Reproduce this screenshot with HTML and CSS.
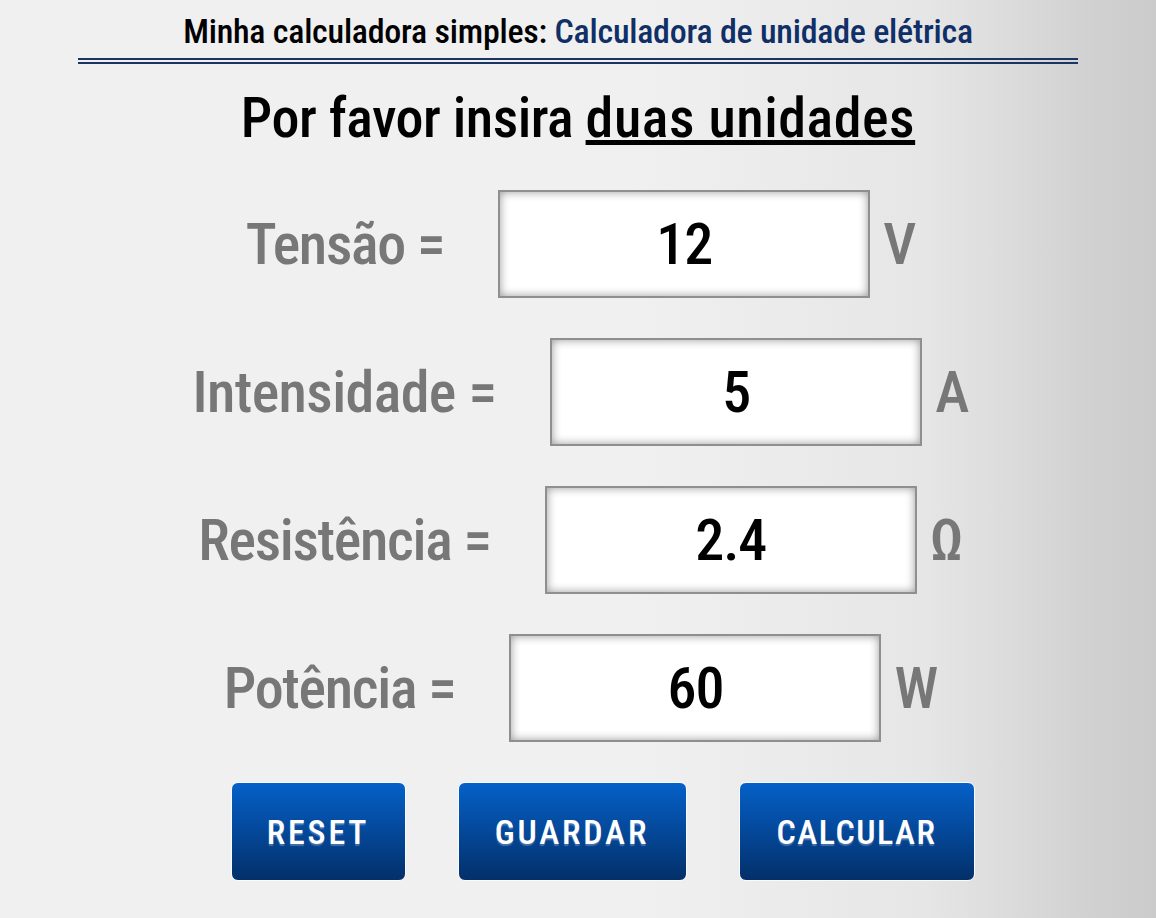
FILE: index.html
```html
<!DOCTYPE html>
<html lang="pt">

<head>
    <meta charset="UTF-8">
    <title>Calculadora de unidade elétrica</title>
    <link rel="stylesheet" href="styles.css">
</head>

<body>
    <div class="wrap">
        <h2 class="title">Minha calculadora simples: <span class="sub">Calculadora de unidade elétrica</span></h2>
        <h1 class="ask">Por favor insira <u>duas unidades</u></h1>

        <div class="row">
            <label class="name">Tensão =</label>
            <div class="box">12</div>
            <span class="unit">V</span>
        </div>
        <div class="row">
            <label class="name name-wide">Intensidade =</label>
            <div class="box">5</div>
            <span class="unit">A</span>
        </div>
        <div class="row">
            <label class="name">Resistência =</label>
            <div class="box">2.4</div>
            <span class="unit">Ω</span>
        </div>
        <div class="row">
            <label class="name">Potência =</label>
            <div class="box">60</div>
            <span class="unit">W</span>
        </div>

        <div class="btns">
            <button class="btn btn-reset">RESET</button>
            <button class="btn btn-save">GUARDAR</button>
            <button class="btn btn-calc">CALCULAR</button>
        </div>
    </div>
</body>

</html>
```

FILE: styles.css
```css
* {
    margin: 0;
    padding: 0;
    box-sizing: border-box;
}

html,
body {
    height: 100%;
}

body {
    font-family: "Roboto", "Liberation Sans", sans-serif;
    font-stretch: condensed;
    background: linear-gradient(to right, #f0f0f0 0, #f0f0f0 55%, #e6e6e6 80%, #dcdcdc 87%, #d0d0d0 95%, #cbcbcb 100%);
    overflow: hidden;
}

.wrap {
    width: 1000px;
    margin-left: 78px;
}

.title {
    height: 64px;
    padding-top: 9px;
    border-bottom: 6px double #1a3563;
    text-align: center;
    font-size: 34px;
    line-height: 44px;
    font-weight: 500;
    letter-spacing: -0.25px;
    color: #000;
    white-space: nowrap;
}

.title .sub {
    color: #0f2f66;
    font-weight: 500;
}

.ask {
    margin-top: 21px;
    height: 66px;
    text-align: center;
    font-size: 56px;
    line-height: 66px;
    font-weight: 500;
    letter-spacing: -0.5px;
    color: #000;
    white-space: nowrap;
}

.ask u {
    letter-spacing: 0.55px;
}

.row {
    display: flex;
    justify-content: center;
    align-items: center;
    height: 108px;
    margin-bottom: 40px;
    padding-left: 2px;
    font-size: 58px;
    font-weight: 500;
    color: #777;
}

.ask + .row {
    margin-top: 39px;
}

.name {
    margin-right: 54px;
    letter-spacing: -1.3px;
    white-space: nowrap;
}

.name-wide {
    letter-spacing: -0.6px;
}

.box {
    width: 372px;
    height: 108px;
    border: 2px solid #8f8f8f;
    background: #fff;
    box-shadow: inset 0 0 10px #999;
    color: #000;
    text-align: center;
    line-height: 104px;
    letter-spacing: -1px;
}

.unit {
    margin-left: 13px;
    letter-spacing: -4px;
}

.btns {
    display: flex;
    justify-content: center;
    gap: 52px;
    margin-top: 2px;
    padding-left: 49px;
}

.btn {
    height: 99px;
    border: 1px solid #f8fbff;
    border-radius: 7px;
    background: linear-gradient(to bottom, #0560c8, #03306a);
    color: #fff;
    font-family: "Roboto", "Liberation Sans", sans-serif;
    font-stretch: condensed;
    font-size: 34px;
    font-weight: 500;
    letter-spacing: 2.8px;
    text-shadow: 0 2px 1px rgba(255, 255, 255, .25);
}

.btn-reset {
    width: 175px;
}

.btn-save {
    width: 229px;
}

.btn-calc {
    width: 236px;
    letter-spacing: 1.5px;
}
```
